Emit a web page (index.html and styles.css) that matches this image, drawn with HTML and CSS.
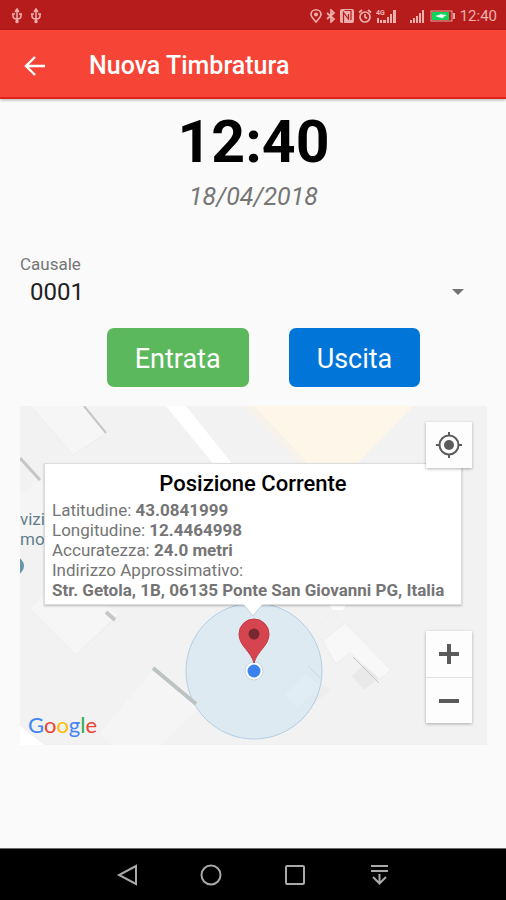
FILE: index.html
```html
<!DOCTYPE html>
<html lang="it">

<head>
  <meta charset="UTF-8" />
  <meta name="viewport" content="width=device-width, initial-scale=1.0" />
  <title>Nuova Timbratura</title>
  <link rel="stylesheet" href="styles.css">
</head>

<body>
  <div class="status-bar">
    <div class="status-left">
      <svg width="12" height="16" viewBox="0 0 12 16" fill="none" stroke="currentColor" stroke-width="1.5">
        <path d="M6 2v12M2 6v2c0 2 2 3 4 3s4-1 4-3V6M4 4l2-3 2 3M1 6h3M8 6h3" />
        <circle cx="6" cy="13.500" r="1" />
      </svg>
      <svg width="12" height="16" viewBox="0 0 12 16" fill="none" stroke="currentColor" stroke-width="1.5">
        <path d="M6 2v12M2 6v2c0 2 2 3 4 3s4-1 4-3V6M4 4l2-3 2 3M1 6h3M8 6h3" />
        <circle cx="6" cy="13.500" r="1" />
      </svg>
    </div>
    <div class="status-right">
      <svg width="12" height="14" viewBox="0 0 12 14" fill="none" stroke="currentColor" stroke-width="1.600">
        <path d="M6 13C3 9.500 1 7.500 1 5.500a5 4.700 0 0 1 10 0C11 7.500 9 9.500 6 13z" />
        <circle cx="6" cy="5.500" r="1.200" fill="currentColor" />
      </svg>
      <svg width="10" height="14" viewBox="0 0 10 14" fill="none" stroke="currentColor" stroke-width="1.700">
        <path d="M1 4l7 6-3 3V1l3 3-7 6" />
      </svg>
      <svg width="14" height="14" viewBox="0 0 14 14">
        <rect width="14" height="14" rx="2" fill="currentColor" />
        <path d="M3.500 14V3.500l5 6.500V5M4.500 1.500h6.500V11" fill="none" stroke="#b71c1c" stroke-width="1.200" />
      </svg>
      <svg width="14" height="14" viewBox="0 0 14 14" fill="none" stroke="currentColor" stroke-width="1.700">
        <circle cx="7" cy="8" r="5" />
        <path d="M7 5v3l2 1.500M1 3.500L4 1M13 3.500L10 1" />
      </svg>
      <svg class="signal-data" width="22" height="14" viewBox="0 0 22 14" fill="currentColor">
        <text class="signal-type" x="0" y="6">4G</text>
        <path d="M1 9h2v5H1zM4 11h2v3H4zM7 11h3v3H7zM11 8h2v6h-2zM14 5h2v9h-2zM17 1h3v13h-3z" />
      </svg>
      <svg width="16" height="14" viewBox="0 0 16 14" fill="currentColor">
        <path d="M0 11h2v3H0zM3 9h2v5H3zM6 7h2v7H6zM9 4h2v10H9zM12 1h2v13h-2z" />
      </svg>
      <svg width="26" height="12" viewBox="0 0 26 12">
        <rect x="1" y="1" width="21" height="10" fill="none" stroke="#e5a3a0" />
        <path d="M23 3h2v6h-2z" fill="#e5a3a0" />
        <rect x="2" y="2" width="17" height="8" fill="#10d35a" />
        <path d="M6 6l4-1V4l3 1h3l-3 2v1L9 7z" fill="#fff" stroke="#fff" stroke-width="0.500" />
      </svg>
      <span class="status-time">12:40</span>
    </div>
  </div>

  <header class="toolbar">
    <button class="back" type="button" aria-label="Indietro">
      <svg width="22" height="22" viewBox="0 0 22 22" fill="none" stroke="currentColor" stroke-width="2.4">
        <path d="M21 11H3M11 2l-9 9 9 9" />
      </svg>
    </button>
    <h1>Nuova Timbratura</h1>
  </header>

  <main class="content">
    <div class="clock">12:40</div>
    <div class="date">18/04/2018</div>

    <form id="timbraturaForm">
      <label for="causale">Causale</label>
      <div class="select-box">
        <select name="causale" id="causale">
          <option value="0001">0001</option>
        </select>
        <svg class="caret" width="12" height="6" viewBox="0 0 12 6">
          <path d="M0 0h12L6 6z" fill="#737373" />
        </svg>
      </div>

      <div class="actions">
        <button class="btn entrata" type="button">Entrata</button>
        <button class="btn uscita" type="button">Uscita</button>
      </div>
    </form>

    <section class="map">
      <svg class="map-tiles" viewBox="0 0 467 339" preserveAspectRatio="xMidYMid slice">
        <rect width="467" height="339" fill="#f2f2f2" />
        <!-- buildings -->
        <path d="M11 0h52l24 27-34 22z" fill="#f6f6f6" />
        <path d="M11 0l42 49 34-22" fill="none" stroke="#ededed" />
        <path d="M0 88l20-14 10 10v50H0z" fill="#f5f5f5" />
        <path d="M10 203l46 46 42-40-24-20H24z" fill="#f6f6f6" />
        <path d="M10 203l46 46 42-40" fill="none" stroke="#ededed" />
        <path d="M80 327l55-65 45 38-38 39H92z" fill="#f5f5f5" />
        <path d="M303 235l22-18 46 47-13 10-28-28-14 12z" fill="#f8f8f8" stroke="#efefef" />
        <path d="M303 235l-12-12 21-16 13 10" fill="none" stroke="#efefef" />
        <path d="M332 270l12-11 15 13-15 12z" fill="#e9e9e9" />
        <path d="M265 290l22-22 24 16-34 28z" fill="#eeeeee" />
        <!-- roads -->
        <path d="M146 0h20l48 60h-19z" fill="#fff" />
        <path d="M0 320l24 19H0z" fill="#fff" />
        <path d="M308 197h19l-4 7h-10z" fill="#fff" />
        <path d="M225 0h168l-56 58h-48z" fill="#fef6e9" />
        <path d="M225 0h9l55 58h-9z" fill="#f7f3ea" />
        <g fill="none" stroke="#c6c6c6">
          <path d="M64 0l22 27" stroke-width="2" />
          <path d="M0 52l20 22" stroke-width="3" />
          <path d="M86 206l9 8" stroke-width="4" />
          <path d="M333 251l26 26" stroke-width="1" />
        </g>
        <circle cx="-5" cy="160" r="9" fill="#6795aa" />
        <!-- accuracy -->
        <circle cx="234" cy="265" r="68" fill="#deeaf2" stroke="#b4cde2" />
        <path d="M265 288l21-20 14 12-23 22z" fill="#e1edf5" />
        <path d="M288 260l12 12" stroke="#c8d8e1" />
        <path d="M133 262l43 36" stroke="#bcc3c2" stroke-width="4" />
        <circle cx="234" cy="265" r="9" fill="#fff" stroke="#c6d6e4" />
        <circle cx="234" cy="265" r="6.500" fill="#3b82ee" />
        <!-- marker -->
        <path d="M234 257c-3-12-15-17-15-29a15 15 0 0 1 30 0c0 12-12 17-15 29z" fill="#d5444f" stroke="#c13c46" />
        <circle cx="234" cy="228" r="5.500" fill="#762a30" />
      </svg>

      <div class="place">vizi<br>mo</div>

      <div class="info-window">
        <h2>Posizione Corrente</h2>
        <p>Latitudine: <b>43.0841999</b></p>
        <p>Longitudine: <b>12.4464998</b></p>
        <p>Accuratezza: <b>24.0 metri</b></p>
        <p>Indirizzo Approssimativo:</p>
        <p><b>Str. Getola, 1B, 06135 Ponte San Giovanni PG, Italia</b></p>
        <svg class="info-tip" width="24" height="13" viewBox="0 0 24 13">
          <path d="M2 0l10 12L22 0z" fill="#fff" />
          <path d="M3 1l9 11 9-11" fill="none" stroke="#c3d0da" />
        </svg>
      </div>

      <button class="map-btn locate" type="button" aria-label="La mia posizione">
        <svg width="26" height="26" viewBox="0 0 26 26" fill="none" stroke="#5c5c5c" stroke-width="2">
          <circle cx="13" cy="13" r="9.500" />
          <circle cx="13" cy="13" r="5" fill="#5c5c5c" stroke="none" />
          <path d="M13 0v4M13 22v4M0 13h4M22 13h4" />
        </svg>
      </button>

      <div class="zoom">
        <button class="map-btn" type="button" aria-label="Ingrandisci">
          <svg width="22" height="22" viewBox="0 0 22 22" stroke="#5a5a5a" stroke-width="4">
            <path d="M11 1v20M1 11h20" />
          </svg>
        </button>
        <button class="map-btn" type="button" aria-label="Riduci">
          <svg width="22" height="22" viewBox="0 0 22 22" stroke="#5a5a5a" stroke-width="4">
            <path d="M1 11h20" />
          </svg>
        </button>
      </div>

      <div class="google"><span class="b">G</span><span class="r">o</span><span class="y">o</span><span class="b">g</span><span class="g">l</span><span class="r">e</span></div>
    </section>
  </main>

  <nav class="nav-bar">
    <button type="button" aria-label="Indietro">
      <svg width="22" height="22" viewBox="0 0 22 22"><path d="M20 2v18L3 11z" /></svg>
    </button>
    <button type="button" aria-label="Home">
      <svg width="22" height="22" viewBox="0 0 22 22"><circle cx="11" cy="11" r="9.500" /></svg>
    </button>
    <button type="button" aria-label="Recenti">
      <svg width="22" height="22" viewBox="0 0 22 22"><rect x="2" y="2" width="18" height="18" rx="1" /></svg>
    </button>
    <button type="button" aria-label="Notifiche">
      <svg width="22" height="22" viewBox="0 0 22 22"><path d="M3 2h17M3 7h17M11.500 10v9M5 13l6.500 6.500L18 13" /></svg>
    </button>
  </nav>
</body>

</html>
```
FILE: styles.css
```css
* {
  box-sizing: border-box;
  margin: 0;
  padding: 0;
  font-family: Roboto, 'Liberation Sans', sans-serif;
}

body {
  min-height: 100vh;
  display: flex;
  flex-direction: column;
  background: #fafafa;
  color: #757575;
}

svg {
  display: block;
  flex-shrink: 0;
}

button {
  display: flex;
  align-items: center;
  justify-content: center;
  border: none;
  background: none;
  cursor: pointer;
}

.status-bar {
  height: 30px;
  padding: 2px 9px 0 11px;
  display: flex;
  align-items: center;
  justify-content: space-between;
  background: #b71c1c;
  color: #eeb0ad;
}

.status-left {
  display: flex;
  gap: 7px;
}

.status-right {
  display: flex;
  align-items: center;
  gap: 4px;
}

.signal-data {
  margin-right: 8px;
}

.signal-type {
  font-size: 7px;
  font-weight: 700;
}

.status-time {
  font-size: 15px;
  line-height: 20px;
}

.toolbar {
  height: 69px;
  padding: 4px 24px 0;
  display: flex;
  align-items: center;
  gap: 43px;
  background: #f64436;
  border-bottom: 2px solid #e02318;
  box-shadow: 0 1px 3px rgba(0, 0, 0, 0.3);
  color: #fff;
}

.toolbar h1 {
  font-size: 25px;
  line-height: 32px;
  font-weight: 500;
}

.back {
  color: #fff;
}

.content {
  flex: 1;
  padding: 8px 19px 24px 20px;
}

.clock {
  font-size: 59px;
  line-height: 70px;
  font-weight: 700;
  color: #000;
  text-align: center;
}

.date {
  margin-top: 5px;
  font-size: 25px;
  line-height: 30px;
  font-style: italic;
  text-align: center;
}

label {
  display: block;
  margin-top: 42px;
  font-size: 17px;
  line-height: 20px;
}

.select-box {
  position: relative;
}

select {
  display: block;
  width: 100%;
  height: 36px;
  padding: 0 10px;
  border: none;
  background: none;
  appearance: none;
  font-size: 24px;
  color: #212121;
}

.caret {
  position: absolute;
  right: 23px;
  top: 15px;
  pointer-events: none;
}

.actions {
  display: flex;
  justify-content: center;
  gap: 40px;
  margin-top: 18px;
  padding-left: 20px;
}

.btn {
  height: 59px;
  padding: 2px 28px 0;
  border-radius: 7px;
  font-size: 27px;
  color: #fff;
}

.entrata {
  background: #5cb85c;
}

.uscita {
  background: #0275d8;
}

.map {
  position: relative;
  height: 339px;
  margin-top: 19px;
  overflow: hidden;
}

.map-tiles {
  width: 100%;
  height: 100%;
}

.place {
  position: absolute;
  left: 0;
  top: 103px;
  font-size: 17px;
  line-height: 20px;
  color: #5f7f8c;
}

.info-window {
  position: absolute;
  left: 24px;
  right: 25px;
  top: 57px;
  padding: 7px 7px 4px;
  background: #fff;
  border: 1px solid #dcdcdc;
  box-shadow: 0 1px 2px rgba(0, 0, 0, 0.25);
}

.info-window h2 {
  margin-bottom: 3px;
  font-size: 22px;
  line-height: 26px;
  font-weight: 500;
  color: #000;
  text-align: center;
}

.info-window p {
  font-size: 17px;
  line-height: 20px;
  white-space: nowrap;
}

.info-tip {
  position: absolute;
  left: 50%;
  top: 100%;
  margin-left: -12px;
}

.map-btn {
  width: 46px;
  height: 46px;
  background: #fdfdfd;
}

.locate,
.zoom {
  position: absolute;
  right: 15px;
  box-shadow: 0 1px 3px rgba(0, 0, 0, 0.3);
}

.locate {
  top: 16px;
}

.zoom {
  bottom: 22px;
}

.zoom .map-btn + .map-btn {
  border-top: 1px solid #e2e2e2;
}

.google {
  position: absolute;
  left: 8px;
  bottom: 6px;
  font-family: Lato, sans-serif;
  font-size: 22px;
  line-height: 28px;
}

.google span {
  font-family: inherit;
}

.b {
  color: #4285f4;
}

.r {
  color: #ea4335;
}

.y {
  color: #fbbc05;
}

.g {
  color: #34a853;
}

.nav-bar {
  height: 52px;
  display: flex;
  align-items: center;
  justify-content: center;
  gap: 62px;
  background: #000;
  border-top: 1px solid #6b6b6b;
}

.nav-bar svg {
  fill: none;
  stroke: #a9a9a9;
  stroke-width: 2;
}
```
